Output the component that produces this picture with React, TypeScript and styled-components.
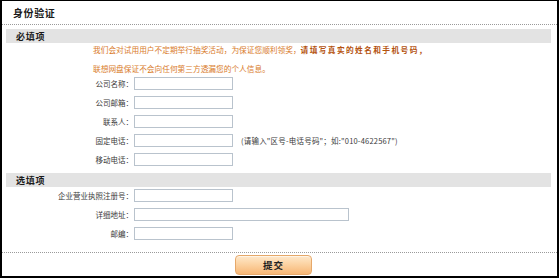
import React from "react";
import styled, { createGlobalStyle } from "styled-components";

const GlobalStyle = createGlobalStyle`
  html, body { margin: 0; padding: 0; background: #fff; }
  body { font-family: "Noto Sans CJK SC", "Noto Sans", sans-serif; }
  * { box-sizing: border-box; }
`;

const Frame = styled.div`
  width: 559px;
  height: 278px;
  border-style: solid;
  border-color: #000;
  border-width: 1px 2px 2px 2px;
  background: #fff;
  display: flex;
  flex-direction: column;
  overflow: hidden;
`;

const Header = styled.div`
  height: 24px;
  padding-left: 11px;
  display: flex;
  align-items: center;
  font-size: 10px;
  font-weight: 700;
  letter-spacing: 0.6px;
  color: #1a1a1a;
  border-bottom: 1px dotted #9a9a9a;
`;

const Body = styled.div`
  padding: 4px 4px 0 4px;
  display: flex;
  flex-direction: column;
`;

const SectionBar = styled.div<{ $top?: number }>`
  height: 14px;
  margin-top: ${(p) => p.$top ?? 0}px;
  margin-right: 2px;
  background: #e3e3e3;
  padding-left: 10px;
  display: flex;
  align-items: center;
  font-size: 9px;
  font-weight: 700;
  letter-spacing: 0.8px;
  color: #1a1a1a;
`;

const Notice = styled.div`
  padding-left: 87px;
  display: flex;
  flex-direction: column;
  gap: 5px;
`;

const NoticeLine = styled.div`
  height: 14px;
  line-height: 14px;
  font-size: 7.7px;
  color: #d97b2a;
  white-space: nowrap;
`;

const Strong = styled.span`
  font-weight: 700;
  color: #b4520e;
  letter-spacing: 1.4px;
`;

const Rows = styled.div<{ $top: number }>`
  margin-top: ${(p) => p.$top}px;
  display: flex;
  flex-direction: column;
  gap: 6px;
`;

const Row = styled.div`
  height: 13px;
  display: grid;
  grid-template-columns: 127px auto auto;
  column-gap: 1px;
  align-items: center;
  justify-content: start;
`;

const Label = styled.label`
  text-align: right;
  font-size: 7.5px;
  color: #3a3a3a;
  white-space: nowrap;
  line-height: 13px;
`;

const Input = styled.input<{ $w: number }>`
  width: ${(p) => p.$w}px;
  height: 13px;
  margin: 0;
  padding: 0 2px;
  border: 1px solid #b9c3cd;
  background: #fff;
  font-size: 8px;
  outline: none;
`;

const Hint = styled.span`
  margin-left: 7px;
  font-size: 7.5px;
  letter-spacing: 0.2px;
  color: #3a3a3a;
  white-space: nowrap;
`;

const Footer = styled.div`
  margin-top: 12px;
  border-top: 1px dotted #9a9a9a;
  padding: 2px 0 0 233px;
  display: flex;
`;

const SubmitButton = styled.button`
  width: 77px;
  height: 20px;
  padding: 0;
  border: 1px solid #e6a86a;
  border-radius: 4px;
  background: linear-gradient(#fee8cb 0%, #fcd3a3 45%, #f7b675 100%);
  box-shadow: inset 0 1px 0 #fff4e4;
  font-family: "Noto Sans CJK SC", sans-serif;
  font-size: 9.5px;
  font-weight: 700;
  letter-spacing: 1px;
  color: #222;
  cursor: pointer;
`;

type Field = { label: string; w: number; hint?: string };

const required: Field[] = [
  { label: "公司名称：", w: 99 },
  { label: "公司邮箱：", w: 99 },
  { label: "联系人：", w: 99 },
  { label: "固定电话：", w: 99, hint: '(请输入"区号-电话号码"；如:"010-4622567")' },
  { label: "移动电话：", w: 99 },
];

const optional: Field[] = [
  { label: "企业营业执照注册号：", w: 99 },
  { label: "详细地址：", w: 215 },
  { label: "邮编：", w: 99 },
];

function FieldRow({ f }: { f: Field }) {
  return (
    <Row>
      <Label>{f.label}</Label>
      <Input $w={f.w} />
      {f.hint ? <Hint>{f.hint}</Hint> : <span />}
    </Row>
  );
}

export default function App() {
  return (
    <>
      <GlobalStyle />
      <Frame>
        <Header>身份验证</Header>
        <Body>
          <SectionBar>必填项</SectionBar>
          <Notice>
            <NoticeLine>
              我们会对试用用户不定期举行抽奖活动，为保证您顺利领奖，
              <Strong>请填写真实的姓名和手机号码，</Strong>
            </NoticeLine>
            <NoticeLine>联想网盘保证不会向任何第三方透漏您的个人信息。</NoticeLine>
          </Notice>
          <Rows $top={1}>
            {required.map((f) => (
              <FieldRow key={f.label} f={f} />
            ))}
          </Rows>
          <SectionBar $top={7}>选填项</SectionBar>
          <Rows $top={2}>
            {optional.map((f) => (
              <FieldRow key={f.label} f={f} />
            ))}
          </Rows>
        </Body>
        <Footer>
          <SubmitButton>提交</SubmitButton>
        </Footer>
      </Frame>
    </>
  );
}
